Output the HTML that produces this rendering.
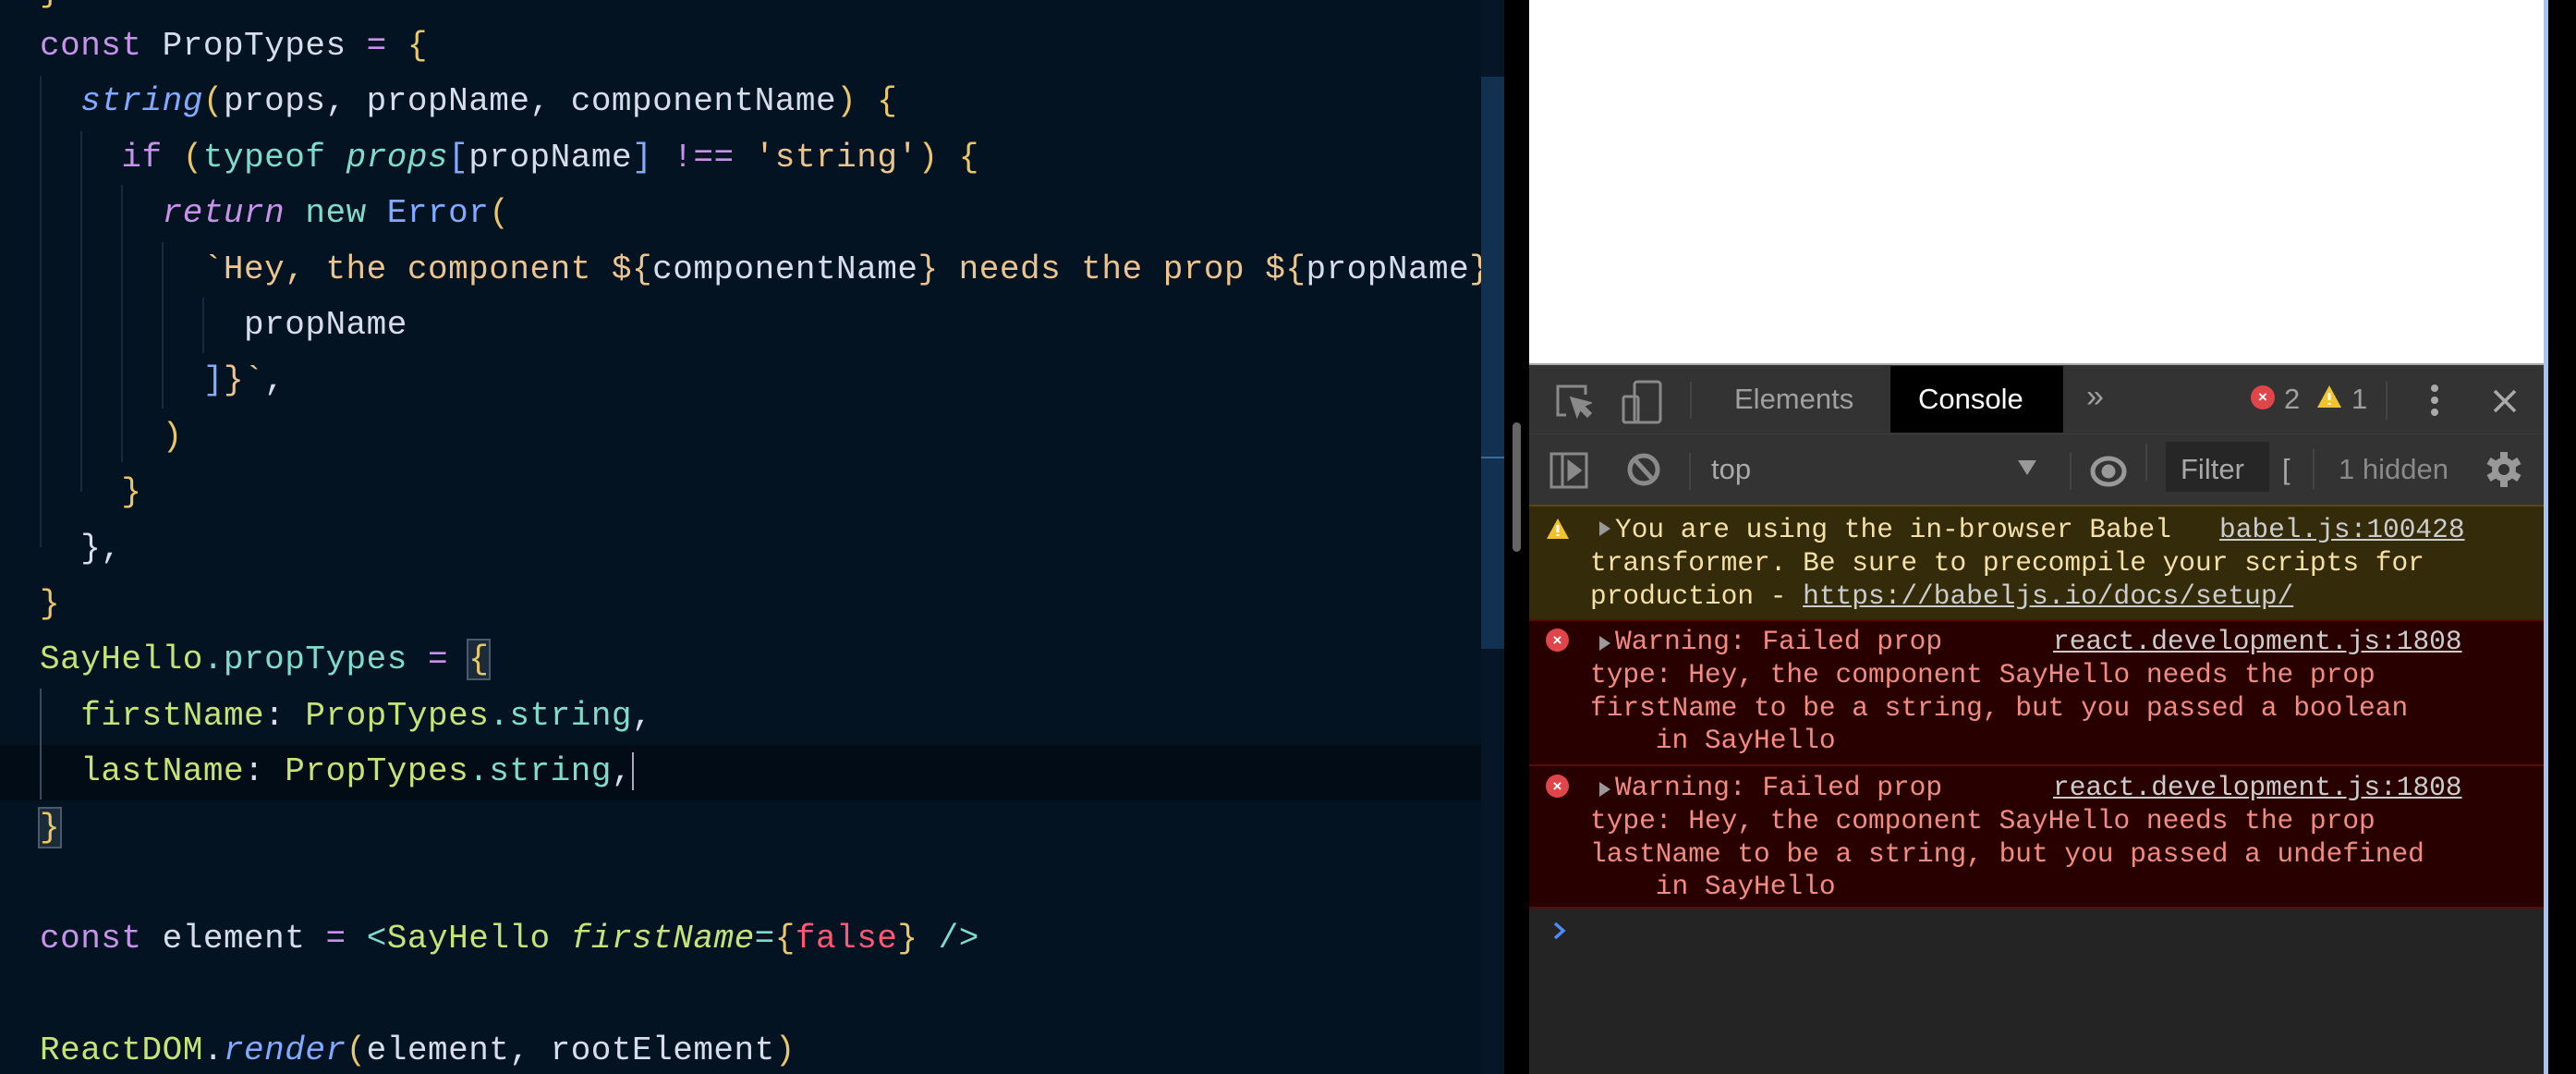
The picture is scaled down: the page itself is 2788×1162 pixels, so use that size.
<!DOCTYPE html>
<html><head><meta charset="utf-8"><style>
*{margin:0;padding:0;box-sizing:border-box}
body{width:2788px;height:1162px;overflow:hidden;background:#000;position:relative;font-family:"Liberation Mono",monospace}
#ed{position:absolute;left:0;top:0;width:1603px;height:1162px;background:#041322;overflow:hidden}
.l{position:absolute;left:43px;height:60px;line-height:60px;font-size:36px;letter-spacing:0.5px;white-space:pre;color:#d6deeb}
.p{color:#c792ea}.y{color:#e8c76a}.b{color:#82aaff}.t{color:#7fdbca}.s{color:#ecc48d}.g{color:#c5e478}.r{color:#ff5874}.i{font-style:italic}
.gd{position:absolute;width:2px;background:#1a2a3d}
.dev{position:absolute;left:1655px;width:1098px}
.mono{font-family:"Liberation Mono",monospace;font-size:29.5px;line-height:35.5px;white-space:pre;position:absolute}
.sans{font-family:"Liberation Sans",sans-serif;position:absolute}
u{text-decoration:underline}
</style></head><body>
<div id="ed">
<div style="position:absolute;left:0;top:806px;width:1603px;height:60px;background:#020c16"></div>
<div class="gd" style="left:43px;top:82px;height:510px"></div>
<div class="gd" style="left:87px;top:142px;height:390px"></div>
<div class="gd" style="left:131px;top:200px;height:300px"></div>
<div class="gd" style="left:175px;top:262px;height:180px"></div>
<div class="gd" style="left:219px;top:322px;height:60px"></div>
<div class="gd" style="left:43px;top:745px;height:120px;background:#3a4a5c"></div>
<div class="l y" style="top:-38px">}</div>
<div class="l" style="top:20px"><span class="p">const</span> PropTypes <span class="p">=</span> <span class="y">{</span></div>
<div class="l" style="top:80px">  <span class="b i">string</span><span class="y">(</span>props, propName, componentName<span class="y">)</span> <span class="y">{</span></div>
<div class="l" style="top:141px">    <span class="p">if</span> <span class="y">(</span><span class="t">typeof</span> <span class="t i">props</span><span class="b">[</span>propName<span class="b">]</span> <span class="p">!==</span> <span class="s">'string'</span><span class="y">)</span> <span class="y">{</span></div>
<div class="l" style="top:201px">      <span class="p i">return</span> <span class="t">new</span> <span class="b">Error</span><span class="y">(</span></div>
<div class="l" style="top:262px">        <span class="s">`Hey, the component ${</span>componentName<span class="s">} needs the prop ${</span>propName<span class="s">}</span></div>
<div class="l" style="top:322px">          propName</div>
<div class="l" style="top:382px">        <span class="b">]</span><span class="s">}`</span>,</div>
<div class="l" style="top:443px">      <span class="y">)</span></div>
<div class="l" style="top:503px">    <span class="y">}</span></div>
<div class="l" style="top:564px">  },</div>
<div class="l" style="top:624px"><span class="y">}</span></div>
<div class="l" style="top:684px"><span class="g">SayHello</span><span class="t">.propTypes</span> <span class="p">=</span> <span class="y" style="outline:2px solid #4a5a6a;background:#1c2b3a">{</span></div>
<div class="l" style="top:745px">  <span class="g">firstName</span>: <span class="g">PropTypes</span><span class="t">.string</span>,</div>
<div class="l" style="top:805px">  <span class="g">lastName</span>: <span class="g">PropTypes</span><span class="t">.string</span>,<span style="border-left:2px solid #aab"></span></div>
<div class="l" style="top:866px"><span class="y" style="outline:2px solid #4a5a6a;background:#1c2b3a">}</span></div>
<div class="l" style="top:986px"><span class="p">const</span> element <span class="p">=</span> <span class="t">&lt;</span><span class="g">SayHello</span> <span class="g i">firstName</span><span class="t">=</span><span class="y">{</span><span class="r">false</span><span class="y">}</span> <span class="t">/&gt;</span></div>
<div class="l" style="top:1107px"><span class="g">ReactDOM</span>.<span class="b i">render</span><span class="y">(</span>element, rootElement<span class="y">)</span></div>
</div>
<div style="position:absolute;left:1603px;top:0;width:25px;height:1162px;background:#061626"></div>
<div style="position:absolute;left:1603px;top:83px;width:25px;height:619px;background:#12304f"></div>
<div style="position:absolute;left:1603px;top:494px;width:25px;height:2px;background:#3a6a9a"></div>
<div style="position:absolute;left:1637px;top:457px;width:9px;height:140px;border-radius:5px;background:#666"></div>
<div style="position:absolute;left:1655px;top:0;width:1098px;height:393px;background:#fff"></div>
<div style="position:absolute;left:2753px;top:0;width:5px;height:1162px;background:#a4c2f4"></div>

<div class="dev" style="top:393px;height:76px;background:#333;border-top:2px solid #aaa"></div>
<div class="dev" style="top:469px;height:77px;background:#333;border-top:1px solid #3e3e3e"></div>
<svg style="position:absolute;left:1683px;top:415px" width="40" height="40" viewBox="0 0 40 40" fill="none" stroke="#8a8a8a" stroke-width="3"><path d="M12 34H3V3h30v9"/><path d="M18 16l6 18 3-7 8 8 3-3-8-8 7-3z" fill="#8a8a8a"/></svg>
<svg style="position:absolute;left:1755px;top:411px" width="44" height="48" viewBox="0 0 44 48" fill="none" stroke="#8a8a8a" stroke-width="3"><rect x="14" y="2" width="28" height="44" rx="3"/><rect x="2" y="18" width="16" height="28" rx="2"/></svg>
<div style="position:absolute;left:1829px;top:413px;width:2px;height:40px;background:#444"></div>
<div class="sans" style="left:1877px;top:414px;font-size:31px;color:#a0a0a0">Elements</div>
<div style="position:absolute;left:2046px;top:396px;width:187px;height:72px;background:#000"></div>
<div class="sans" style="left:2076px;top:414px;font-size:31px;color:#fff">Console</div>
<div class="sans" style="left:2258px;top:410px;font-size:34px;color:#a0a0a0">»</div>
<div style="position:absolute;left:2436px;top:417px;width:26px;height:26px;border-radius:50%;background:#e0454a;color:#fff;font:bold 17px 'Liberation Sans',sans-serif;text-align:center;line-height:26px">×</div>
<div class="sans" style="left:2472px;top:414px;font-size:31px;color:#a0a0a0">2</div>
<svg style="position:absolute;left:2507px;top:415px" width="28" height="28" viewBox="0 0 28 28"><path d="M14 2L27 26H1z" fill="#f2c230"/><path d="M14 10v8M14 21v2" stroke="#fff" stroke-width="3"/></svg>
<div class="sans" style="left:2545px;top:414px;font-size:31px;color:#a0a0a0">1</div>
<div style="position:absolute;left:2582px;top:412px;width:2px;height:42px;background:#444"></div>
<svg style="position:absolute;left:2628px;top:414px" width="14" height="40"><circle cx="7" cy="6" r="4" fill="#aaa"/><circle cx="7" cy="19" r="4" fill="#aaa"/><circle cx="7" cy="32" r="4" fill="#aaa"/></svg>
<svg style="position:absolute;left:2697px;top:420px" width="28" height="28" stroke="#aaa" stroke-width="3.5"><path d="M3 3l22 22M25 3L3 25"/></svg>

<svg style="position:absolute;left:1677px;top:489px" width="42" height="40" fill="none" stroke="#8a8a8a" stroke-width="3"><rect x="2" y="2" width="38" height="36"/><path d="M14 2v36"/><path d="M21 11l12 9-12 9z" fill="#8a8a8a"/></svg>
<svg style="position:absolute;left:1760px;top:488px" width="38" height="40" fill="none" stroke="#8a8a8a" stroke-width="5"><circle cx="19" cy="20" r="15"/><path d="M9 9l20 22"/></svg>
<div style="position:absolute;left:1828px;top:490px;width:2px;height:40px;background:#444"></div>
<div class="sans" style="left:1852px;top:490px;font-size:31px;color:#aaa">top</div>
<svg style="position:absolute;left:2183px;top:496px" width="22" height="20"><path d="M1 2h20L11 18z" fill="#999"/></svg>
<div style="position:absolute;left:2240px;top:490px;width:2px;height:40px;background:#444"></div>
<svg style="position:absolute;left:2261px;top:490px" width="42" height="40" fill="none" stroke="#999" stroke-width="5"><ellipse cx="21" cy="20" rx="17" ry="14"/><circle cx="21" cy="20" r="5" fill="#999"/></svg>
<div style="position:absolute;left:2322px;top:480px;width:2px;height:40px;background:#444"></div>
<div style="position:absolute;left:2344px;top:478px;width:112px;height:54px;background:#262626"></div>
<div class="sans" style="left:2360px;top:490px;font-size:31px;color:#a8a8a8">Filter</div>
<div class="sans" style="left:2470px;top:490px;font-size:31px;color:#aaa">[</div>
<div style="position:absolute;left:2503px;top:485px;width:2px;height:44px;background:#444"></div>
<div class="sans" style="left:2531px;top:490px;font-size:31px;color:#8a8a8a">1 hidden</div>
<svg style="position:absolute;left:2690px;top:488px" width="40" height="40" viewBox="0 0 40 40"><g fill="#999"><circle cx="20" cy="20" r="13"/><rect x="16" y="1" width="8" height="38"/><rect x="16" y="1" width="8" height="38" transform="rotate(60 20 20)"/><rect x="16" y="1" width="8" height="38" transform="rotate(120 20 20)"/></g><circle cx="20" cy="20" r="6" fill="#333"/></svg>

<div class="dev" style="top:546px;height:124px;background:#332b09;border-top:2px solid #5a4a10"></div>
<div class="dev" style="top:670px;height:157px;background:#290000;border-top:2px solid #5c0a0a"></div>
<div class="dev" style="top:827px;height:156px;background:#290000;border-top:2px solid #5c0a0a;border-bottom:2px solid #5c0a0a"></div>
<div class="dev" style="top:983px;height:179px;background:#242424"></div>

<svg style="position:absolute;left:1673px;top:560px" width="26" height="24" viewBox="0 0 26 24"><path d="M13 1L25 23H1z" fill="#f2c230"/><path d="M13 8v8M13 18v2" stroke="#fff" stroke-width="3"/></svg>
<svg style="position:absolute;left:1730px;top:563px" width="14" height="18"><path d="M1 1l12 8-12 8z" fill="#999"/></svg>
<div class="mono" style="left:1748px;top:556px;color:#f5e0a8">You are using the in-browser Babel</div>
<div class="mono" style="left:2402px;top:556px;color:#ccc"><u>babel.js:100428</u></div>
<div class="mono" style="left:1721px;top:592px;color:#f5e0a8">transformer. Be sure to precompile your scripts for
production - <u style="color:#ccc">https://babeljs.io/docs/setup/</u></div>

<div style="position:absolute;left:1673px;top:680px;width:25px;height:25px;border-radius:50%;background:#e0454a;color:#fff;font:bold 17px 'Liberation Sans',sans-serif;text-align:center;line-height:25px">×</div>
<svg style="position:absolute;left:1730px;top:687px" width="14" height="18"><path d="M1 1l12 8-12 8z" fill="#999"/></svg>
<div class="mono" style="left:1748px;top:677px;color:#f28b82">Warning: Failed prop</div>
<div class="mono" style="left:2222px;top:677px;color:#ccc"><u>react.development.js:1808</u></div>
<div class="mono" style="left:1721px;top:713px;color:#f28b82">type: Hey, the component SayHello needs the prop
firstName to be a string, but you passed a boolean
    in SayHello</div>

<div style="position:absolute;left:1673px;top:838px;width:25px;height:25px;border-radius:50%;background:#e0454a;color:#fff;font:bold 17px 'Liberation Sans',sans-serif;text-align:center;line-height:25px">×</div>
<svg style="position:absolute;left:1730px;top:845px" width="14" height="18"><path d="M1 1l12 8-12 8z" fill="#999"/></svg>
<div class="mono" style="left:1748px;top:835px;color:#f28b82">Warning: Failed prop</div>
<div class="mono" style="left:2222px;top:835px;color:#ccc"><u>react.development.js:1808</u></div>
<div class="mono" style="left:1721px;top:871px;color:#f28b82">type: Hey, the component SayHello needs the prop
lastName to be a string, but you passed a undefined
    in SayHello</div>

<svg style="position:absolute;left:1680px;top:996px" width="16" height="22" fill="none" stroke="#4d8bf5" stroke-width="3.5"><path d="M3 3l9 8-9 8"/></svg>
</body></html>
